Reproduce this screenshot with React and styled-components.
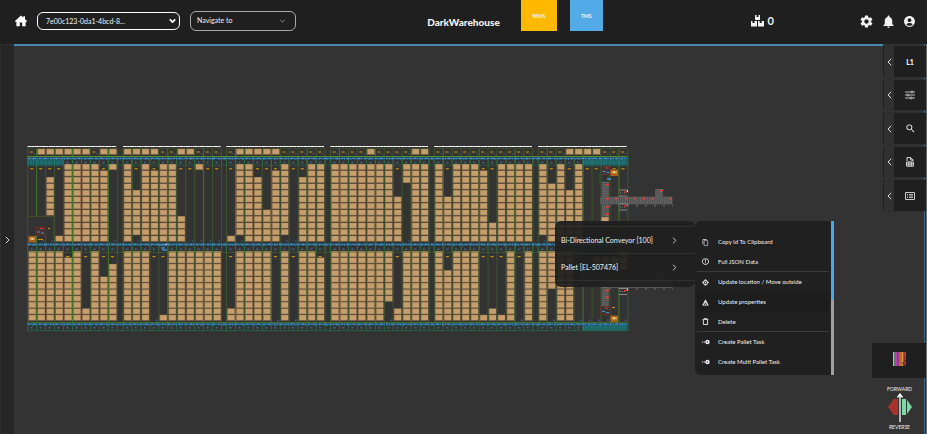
import React from "react";
import styled, { createGlobalStyle } from "styled-components";
import {
  MdSettings,
  MdNotifications,
  MdAccountCircle,
  MdSearch,
  MdContentCopy,
} from "react-icons/md";

const Global = createGlobalStyle`
  * { box-sizing: border-box; }
  body {
    margin: 0;
    background: #333333;
    color: #f2f2f2;
    font-family: Lato, "Liberation Sans", sans-serif;
  }
  button, select { font: inherit; color: inherit; }
`;

/* ---------- page frame ---------- */

const Page = styled.div`
  display: flex;
  flex-direction: column;
  min-height: 100vh;
  overflow: hidden;
`;

const Header = styled.header`
  display: grid;
  grid-template-columns: 1fr auto 1fr;
  height: 44px;
  background: #1f1f1f;
`;

const HeaderStart = styled.div`
  display: flex;
  align-items: center;
  gap: 10px;
  padding: 0 0 2px 15px;
`;

const HeaderEnd = styled.div`
  display: flex;
  align-items: center;
  padding: 0 11px 2px 21px;
`;

const Title = styled.h1`
  margin: 0;
  align-self: center;
  font-size: 10px;
  line-height: 14px;
  font-weight: 900;
`;

const IconButton = styled.button`
  display: grid;
  place-items: center;
  padding: 0;
  border: 0;
  background: none;
  cursor: pointer;
`;

const SelectBox = styled.label`
  display: grid;
  grid-template-columns: 1fr auto;
  align-items: center;
  width: ${(p) => p.$width}px;
  height: ${(p) => p.$height}px;
  border: 1px solid ${(p) => p.$edge};
  border-radius: 6px;
  padding-right: ${(p) => p.$end}px;

  select, svg { grid-row: 1; }
  select { grid-column: 1 / -1; }
  svg { grid-column: 2; pointer-events: none; }
`;

const Select = styled.select`
  appearance: none;
  width: 100%;
  border: 0;
  outline: 0;
  background: transparent;
  font-size: ${(p) => p.$size}px;
  line-height: 12px;
  padding: 0 0 ${(p) => p.$lift}px ${(p) => p.$inset}px;
  option { background: #1f1f1f; }
`;

const Tiles = styled.nav`
  display: flex;
  align-self: flex-start;
  gap: 13px;
`;

const Tile = styled.a`
  display: grid;
  place-items: center;
  width: ${(p) => p.$width}px;
  height: 31px;
  background: ${(p) => p.$color};
  color: #f2f2f2;
  font-size: 5px;
  font-weight: 900;
  text-decoration: none;
`;

const Counter = styled.div`
  display: flex;
  align-items: center;
  gap: 4px;
  margin: 0 85px 0 auto;
  font-size: 11px;
  line-height: 14px;
  font-weight: 700;
`;

const Tools = styled.div`
  display: flex;
  gap: 7px;
`;

const Body = styled.div`
  display: flex;
  flex: 1;
`;

const LeftRail = styled.button`
  width: 14px;
  padding: 0 1px 0 0;
  border: solid #303030;
  border-width: 1px 0 0 1px;
  background: #262626;
  display: grid;
  place-items: center;
`;

const Stage = styled.main`
  position: relative;
  flex: 1;
  border-top: 2px solid #4789ad;
  background: #333333;
`;

const WarehouseMap = styled.svg`
  display: block;
  width: 100%;
  height: auto;
`;

const SideColumn = styled.aside`
  display: flex;
  flex-direction: column;
  justify-content: space-between;
  width: 44px;
  padding-top: 2px;
  background: linear-gradient(to right, transparent 41px, #3b6887 41px, #3b6887 42px, #292929 42px, #292929 43px, #737373 43px);
`;

const TabList = styled.div`
  display: flex;
  flex-direction: column;
  gap: 3px;
`;

const Tab = styled.div`
  display: grid;
  grid-template-columns: 10px 1fr;
  height: 31px;
  margin-right: 1px;
  border-left: 1px solid #202020;
  background: #1f1f1f;
  font-size: 7px;
  font-weight: 900;
  box-shadow: 0 0 1px #181818;
  &:nth-child(even) { height: 30px; }
`;

const TabHandle = styled(IconButton)`
  background: #303030;
`;

const DriveGroup = styled.div`
  display: flex;
  flex-direction: column;
  margin-left: -11px;
  z-index: 1;
`;

const Barcode = styled(IconButton)`
  height: 35px;
  padding-bottom: 3px;
  margin-right: 1px;
  background: #1f1f1f;
`;

const Drive = styled.div`
  display: flex;
  flex-direction: column;
  align-items: center;
  padding: 7px 0 3px;
  font-size: 5px;
  line-height: 8px;
`;

/* ---------- context menus ---------- */

const ContextMenu = styled.div`
  position: absolute;
  left: 541px;
  top: 175px;
  display: flex;
  align-items: flex-start;
`;

const Targets = styled.div`
  width: 140px;
  padding: 5px 0 6px;
  border-radius: 6px;
  background: rgba(30, 30, 30, 0.92);
`;

const Target = styled.button`
  display: flex;
  align-items: center;
  justify-content: space-between;
  width: 100%;
  height: 27px;
  padding: 0 18px 0 6px;
  border: solid #303030;
  border-width: 1px 0 0;
  background: none;
  font-size: 7px;
  line-height: 10px;
  &:last-child { height: 28px; border-bottom-width: 1px; }
`;

const Actions = styled.div`
  display: flex;
  width: 139px;
  border-radius: 6px 0 0 6px;
  background: #202020;
`;

const ActionList = styled.div`
  flex: 1;
  padding: 11px 2px 3px;
`;

const Action = styled.button`
  display: grid;
  grid-template-columns: 9px 1fr;
  align-items: center;
  gap: 7px;
  width: 100%;
  height: 20px;
  padding: 0 0 0 5px;
  border: solid #393939;
  border-width: 0 0 ${(p) => (p.$ruled ? 1 : 0)}px;
  background: ${(p) => (p.$hot ? "#1d1d1d" : "none")};
  font-size: 6px;
  line-height: 10px;
  text-align: left;
  white-space: nowrap;
`;

const Scroller = styled.div`
  width: 3px;
  background: linear-gradient(#4fa6e0 79px, #a0a0a0 79px);
`;

/* ---------- small icons ---------- */

const Chevron = ({ dir = "right", w = 5, h = 8, weight = 1 }) => (
  <svg width={w} height={h} viewBox="0 0 5 8" fill="none" stroke="#dcdcdc" strokeWidth={weight}>
    <path d={dir === "right" ? "M.8.8 4 4 .8 7.2" : "M4.2.8 1 4l3.2 3.2"} />
  </svg>
);

const Down = ({ bold }) => (
  <svg width="7" height="6" viewBox="0 0 7 6" fill="none" stroke={bold ? "#fff" : "#999"} strokeWidth={bold ? 1.8 : 0.9}>
    <path d={bold ? "M.8 1.4 3.5 4.1 6.2 1.4" : "M1.2 2 3.5 4 5.8 2"} />
  </svg>
);

const Home = () => (
  <svg width="12" height="12" viewBox="0 0 12 12" fill="#fff">
    <path d="M6 .5 8.3 2.6V1.3H10v2.9l2 1.9v.7h-1.4v4.4H7.2V7.6H4.8v3.6H1.4V6.8H0v-.7z" />
  </svg>
);

const Crates = () => (
  <svg width="13" height="12" viewBox="0 0 13 12" fill="#f2f2f2">
    <path d="M4 0h1.5v2h2V0H9v5H4zM0 6h1.5v2h2V6H6v5.5H0zM7 6h1.7v2h2V6H13v5.5H7z" />
  </svg>
);

const Sliders = () => (
  <svg width="10" height="10" viewBox="0 0 10 10" fill="none" stroke="#ddd" strokeWidth=".8">
    <path d="M0 2h6M8 2h2M0 5h2M4 5h6M0 8h5M7 8h3" />
    <circle cx="7" cy="2" r="1" />
    <circle cx="3" cy="5" r="1" />
    <circle cx="6" cy="8" r="1" />
  </svg>
);

const Sheet = () => (
  <svg width="8" height="10" viewBox="0 0 8 10" fill="none" stroke="#eee">
    <path d="M1 4V.6h3.8L7 2.8V4M4.6.6v2.4H7" strokeWidth=".9" />
    <path d="M.6 5h6.8v4.2H.6zM.6 7.1h6.8M2.9 5v4.2M5.2 5v4.2" strokeWidth=".9" />
  </svg>
);

const ListCard = () => (
  <svg width="10" height="8" viewBox="0 0 10 8" fill="none" stroke="#ddd">
    <path d="M.5.5h9v7h-9z" strokeWidth=".9" />
    <path d="M2 2.500h1M4 2.500h4M2 4h1M4 4h4M2 5.500h1M4 5.500h4" strokeWidth=".8" />
  </svg>
);

const Shield = () => (
  <svg width="7" height="8" viewBox="0 0 7 8" fill="none" stroke="#eee" strokeWidth=".9">
    <path d="M1.500 1h4L6.500 2.500v2L5.200 6H4.300L3.500 7 2.700 6h-.9L.5 4.500v-2zM3.500 2v1.700M3.500 4.300v.8" />
  </svg>
);

const Target4 = () => (
  <svg width="7" height="7" viewBox="0 0 7 7" fill="none">
    <path d="M3.500 0 7 3.500 3.500 7 0 3.500z" fill="#ddd" />
    <circle cx="3.500" cy="3.500" r="1.600" fill="#222" />
    <circle cx="3.500" cy="3.500" r=".8" fill="#eee" />
  </svg>
);

const Warning = () => (
  <svg width="7" height="7" viewBox="0 0 7 7">
    <path d="M3.500.3 6.800 6.500H.2z" fill="#eee" />
    <path d="M2 5.500h1V4h1v1.500h1" stroke="#222" strokeWidth=".7" fill="none" />
  </svg>
);

const Bin = () => (
  <svg width="7" height="7" viewBox="0 0 7 7" fill="none" stroke="#eee" strokeWidth=".9">
    <path d="M.6 1.400h5.800M2.500 1.200V.5h2v.7M1.400 1.600v4.900h4.200V1.600" />
  </svg>
);

const TaskIcon = () => (
  <svg width="8" height="6" viewBox="0 0 8 6" fill="#eee">
    <path d="M0 2.500h1v1H0zM1.600 2.500h2v1h-2z" />
    <circle cx="5.500" cy="3" r="2.200" />
    <path d="M4.800 3h1.400M5.500 2.300v1.400" stroke="#222" strokeWidth=".5" />
  </svg>
);

const StripeIcon = () => (
  <svg width="13" height="14" viewBox="0 0 13 14">
    {["#b9c0a0", "#4f9c78", "#c23bb8", "#a048c8", "#e0512f", "#ef7a2c", "#d8a03a", "#e8392f", "#e0304a"].map((c, i) => (
      <rect key={i} x={i * 1.44} width="1.400" height="14" fill={c} />
    ))}
    <path d="M9 11h2M11 9h2M11 6h1M10 13h3" stroke="#222" />
  </svg>
);

const DriveIcon = () => (
  <svg width="26" height="30" viewBox="0 0 26 30">
    <path d="M1 14 6 7v14z" fill="#a8332c" />
    <path d="M6 6h5v16H6z" fill="#a8332c" />
    <path d="M15 6h4v16h-4z" fill="#79dca4" />
    <path d="m25 14-5-7v14z" fill="#79dca4" />
    <path d="M13 2v27M10.500 4.500 13 1l2.500 3.500" stroke="#fff" strokeWidth="1.300" fill="none" />
  </svg>
);

/* ---------- warehouse drawing ---------- */

const PITCH = 8.96;
const F = [0, 11];
const L = [0, 10];
const N = null;

// One entry per rack: filled row span of every aisle above and below the middle track.
const RACKS = [
  {
    x: 27.700, top: "0111111011",
    upper: [N, N, [2, 7], [11, 11], F, F, F, F, [1, 11], [0, 0]],
    lower: [L, L, L, L, [1, 10], L, [9, 10], L, [4, 10], [2, 10]],
  },
  {
    x: 123, top: "11110011000",
    upper: [F, [4, 10], F, [1, 11], F, F, [8, 11], N, [0, 0], N, N],
    lower: [L, L, L, N, [10, 10], L, L, L, L, L, L],
  },
  {
    x: 226.500, top: "01111100000",
    upper: [[11, 11], [0, 10], F, [2, 11], [7, 11], [1, 11], [0, 10], N, [2, 11], F, F],
    lower: [[9, 10], L, L, L, L, N, L, N, L, L, [1, 10]],
  },
  {
    x: 330.500, top: "00001000011",
    upper: [F, F, F, F, F, F, F, [5, 11], [0, 2], F, F],
    lower: [L, L, L, L, L, L, [0, 7], [9, 10], L, L, L],
  },
  {
    x: 434.300, top: "00000000000",
    upper: [F, [5, 11], F, F, F, [1, 11], [9, 11], F, F, F, F],
    lower: [L, [3, 10], L, L, L, [10, 10], [9, 10], [10, 10], L, N, L],
  },
  {
    x: 538.300, top: "0001111000",
    upper: [[0, 10], [3, 11], F, [4, 11], F, N, N, N, N, N],
    lower: [L, [0, 5], L, L, N, N, [1, 2], [1, 2], [1, 2], [0, 2]],
  },
];

const Crate = ({ x, y, h = 5.900 }) => (
  <g>
    <rect x={x + 0.600} y={y} width="7.800" height={h} fill="#92734f" />
    <rect x={x + 1.400} y={y + 0.400} width="6.500" height={h - 1.100} fill="#c69d6c" />
  </g>
);

const Stack = ({ span, x, y, step }) =>
  span
    ? Array.from({ length: span[1] - span[0] + 1 }, (_, i) => (
        <Crate key={i} x={x} y={y + (span[0] + i) * step} />
      ))
    : null;

const Amber = ({ x, y }) => (
  <g>
    <rect x={x + 2.500} y={y} width="3.200" height="1" fill="#c99008" />
    <rect x={x + 3.500} y={y + 0.800} width="1.200" height="1" fill="#8c6715" />
  </g>
);

const Speck = ({ x, y }) => (
  <g>
    <rect x={x + 3} y={y} width="1.500" height="1.600" fill="#3d6f99" />
    <rect x={x + 4.500} y={y} width="1" height="1.600" fill="#41505c" />
  </g>
);

const Track = ({ y }) => (
  <g>
    <path d={`M27.700 ${y}H627`} stroke="#235067" strokeWidth="2.200" />
    <path d={`M27.700 ${y}H627`} stroke="#459bd0" strokeWidth="1.200" strokeDasharray="2 .8 1 1.200 3 .7 1 1.500" />
    <path d={`M29 ${y + 1}H627`} stroke="#36739b" strokeWidth="1" strokeDasharray="1 2 2 1.500 1 3" />
  </g>
);

const Rack = ({ rack }) => {
  const n = rack.upper.length;
  const end = rack.x + n * PITCH;
  return (
    <g>
      <path d={`M${rack.x} 146.500H${end - 1}`} stroke="#999" strokeWidth="1.200" />
      <path d={`M${rack.x} 146.500H${end - 1}`} stroke="#fff" strokeDasharray="4 .5 2 .5" />
      <path d={`M${rack.x} 148.500H${end}`} stroke="#3c5028" strokeWidth=".7" />
      {rack.upper.map((up, i) => {
        const x = rack.x + i * PITCH;
        const low = rack.lower[i];
        return (
          <g key={i}>
            {rack.top[i] === "1" ? (
              <Crate x={x} y={148.800} h={5.900} />
            ) : (
              <g>
                <Amber x={x - 0.500} y={151.500} />
                <rect x={x + 6} y="153" width="1.300" height="1" fill="#3d6078" />
              </g>
            )}
            <Speck x={x} y={161.800} />
            <Speck x={x} y={248.500} />
            <Speck x={x} y={327} />
            {(!up || up[0] > 0) && <Amber x={x} y={168.200} />}
            {(!low || low[0] > 0) && <Amber x={x} y={256} />}
            {(!up || up[1] < 11) && <rect x={x + 6} y="240" width="1.400" height="1.600" fill="#34597a" />}
            {(!low || low[1] < 10) && <rect x={x + 6} y="319.500" width="1.400" height="1.600" fill="#34709a" />}
            <Stack span={up} x={x} y={164} step={6.520} />
            <Stack span={low} x={x} y={251.200} step={6.360} />
          </g>
        );
      })}
      {Array.from({ length: n + 1 }, (_, i) => {
        const x = rack.x + i * PITCH;
        const bright = i % 4 === 1;
        return (
          <g key={i}>
            <path d={`M${x} 149V323`} stroke={bright ? "#477d25" : "#41582b"} strokeWidth=".9" />
            <path d={`M${x} 157V165.500M${x} 243V252M${x} 322V331`} stroke="#247044" strokeWidth=".9" />
          </g>
        );
      })}
    </g>
  );
};

const Rollers = ({ x, y, w, h, vertical }) => (
  <g>
    <rect x={x} y={y} width={w} height={h} fill="#505050" />
    <path
      d={vertical ? `M${x + w / 2} ${y}V${y + h}` : `M${x} ${y + h / 2}H${x + w}`}
      stroke="#777"
      strokeWidth={vertical ? w - 1 : h - 1}
      strokeDasharray="1 1.200"
      opacity=".6"
    />
  </g>
);

const Station = ({ x, y }) => (
  <g>
    <path d={`M${x} ${y}h8M${x} ${y + 6}h8`} stroke="#888" />
    <path d={`M${x + 1} ${y + 3}h6`} stroke="#7b8b8b" strokeDasharray="1 1" />
    <path d={`M${x + 5} ${y + 2}h3`} stroke="#d33" strokeWidth="1.300" />
    <path d={`M${x + 8.500} ${y}v2`} stroke="#ddd" />
  </g>
);

const Crane = ({ x, y }) => (
  <g>
    <rect x={x} y={y} width="7.500" height="6.500" fill="#a76118" />
    <rect x={x + 1} y={y + 1.500} width="5.500" height="2.500" fill="#d49237" />
    <rect x={x + 3} y={y + 2} width="1.500" height="1.500" fill="#fff1c9" />
  </g>
);

const Shuttle = ({ x, y }) => (
  <g>
    <rect x={x} y={y} width="9" height="8" fill="#3c3637" stroke="#742b2b" strokeWidth=".8" />
    <path d={`M${x + 4} ${y + 1.500}h3`} stroke="#e03434" />
    <path d={`M${x + 1} ${y + 5}h3m1 1h3`} stroke="#4a90c4" strokeWidth="1.200" />
  </g>
);

const Warehouse = () => (
  <WarehouseMap viewBox="14 46 869 388" role="img" aria-label="Warehouse floor map">
    <path d="M27.700 165.300H627" stroke="#2c5840" strokeWidth=".8" />
    {RACKS.map((r) => (
      <Rack key={r.x} rack={r} />
    ))}
    <rect x="27.700" y="158" width="36" height="7.500" fill="#126c70" opacity=".75" />
    <rect x="582.500" y="156.500" width="45" height="9" fill="#12747a" opacity=".7" />
    <rect x="582.500" y="322.500" width="45" height="8.500" fill="#12747a" opacity=".7" />
    <path d="M28 162H64M583 162H627M583 328H627" stroke="#36a18b" strokeWidth="5" strokeDasharray=".6 2" opacity=".5" />
    <path d="M27.700 156.500H627" stroke="#4c8a2d" strokeWidth="1" />
    <path d="M27.700 252.400H627" stroke="#487529" strokeWidth=".7" opacity=".7" />
    <path d="M27.700 322.500H627" stroke="#426b2a" strokeWidth="1" />
    <path d="M27.700 330.700H627" stroke="#246643" strokeWidth=".9" />
    <Track y={158.300} />
    <Track y={244.300} />
    <Track y={324.200} />
    <rect x="28.500" y="217" width="18" height="18" fill="#333" />
    <path d="M27.700 216.400H54V243" stroke="#3c5028" fill="none" />
    <Shuttle x={36} y={227} />
    <Crane x={28.500} y={236} />
    <path d="M38 239.500h5M48 228.500h2" stroke="#c99008" strokeWidth="1.200" />
    <path d="M159 245h8M161 248h4M162 250h5" stroke="#4388ba" strokeWidth="1.500" />
    <rect x="165.500" y="243.500" width="1.200" height="1.200" fill="#dff" />
    <rect x="599" y="174" width="10" height="8" fill="none" stroke="#245b2c" />
    <Shuttle x={601.500} y={166.500} />
    <path d="M607 179h4" stroke="#4a9ae0" strokeWidth="1.500" />
    <Crane x={610.500} y={169.500} />
    <Rollers x={601.500} y={182} w={7.500} h={35} vertical />
    <Rollers x={600.500} y={196.500} w={72} h={8} />
    <Rollers x={655} y={189} w={8} h={8} vertical />
    <Station x={619} y={190} />
    <Station x={619} y={204} />
    <path d="M606 184.500h3M606 207h3M606 214h3M606 198.500h3M615 198.500h3M625 198.500h3M633 198.500h3M642 198.500h3M651 198.500h3M660 190.500h3M669 198.500h3" stroke="#ee3c3c" strokeWidth="1.500" />
    <path d="M609 205.500h64" stroke="#5b5b5b" strokeDasharray="2 7" strokeWidth="2" />
    <Crate x={600.500} y={217} h={5} />
    <Rollers x={600.500} y={280} w={72} h={8} />
    <Rollers x={655} y={272} w={8} h={8} vertical />
    <Rollers x={601.500} y={287} w={7.500} h={20} vertical />
    <path d="M609 288.500h64" stroke="#5b5b5b" strokeDasharray="2 7" strokeWidth="2" />
    <Station x={619} y={288.500} />
    <path d="M606 290.500h3M606 297.500h3" stroke="#ee3c3c" strokeWidth="1.500" />
    <Shuttle x={601} y={306.500} />
    <Crane x={610.500} y={315.500} />
    <path d="M612 307.500h3" stroke="#d49237" />
  </WarehouseMap>
);

/* ---------- content ---------- */

const TABS = [
  { name: "Level", icon: "L1" },
  { name: "Filters", icon: <Sliders /> },
  { name: "Search", icon: <MdSearch size={11} /> },
  { name: "Reports", icon: <Sheet /> },
  { name: "List", icon: <ListCard /> },
];

const ACTIONS = [
  { text: "Copy Id To Clipboard", icon: <MdContentCopy size={7} /> },
  { text: "Full JSON Data", icon: <Shield />, ruled: true },
  { text: "Update location / Move outside", icon: <Target4 /> },
  { text: "Update properties", icon: <Warning />, hot: true },
  { text: "Delete", icon: <Bin />, ruled: true },
  { text: "Create Pallet Task", icon: <TaskIcon /> },
  { text: "Create Multi Pallet Task", icon: <TaskIcon /> },
];

export default function App() {
  return (
    <Page>
      <Global />
      <Header>
        <HeaderStart>
          <IconButton aria-label="Home"><Home /></IconButton>
          <SelectBox $width={143} $height={18} $edge="#fff" $end={3}>
            <Select aria-label="Warehouse id" $size={7} $inset={8} $lift={0}>
              <option>7e00c123-0da1-4bcd-8...</option>
            </Select>
            <Down bold />
          </SelectBox>
          <SelectBox $width={106} $height={20} $edge="#aaa" $end={9}>
            <Select aria-label="Navigate to" $size={7} $inset={6} $lift={3}>
              <option>Navigate to</option>
            </Select>
            <Down />
          </SelectBox>
        </HeaderStart>
        <Title>DarkWarehouse</Title>
        <HeaderEnd>
          <Tiles>
            <Tile href="#wms" $color="#ffb800" $width={36}>WMS</Tile>
            <Tile href="#tms" $color="#52aae7" $width={33}>TMS</Tile>
          </Tiles>
          <Counter><Crates />0</Counter>
          <Tools>
            <IconButton aria-label="Settings"><MdSettings size={15} /></IconButton>
            <IconButton aria-label="Notifications"><MdNotifications size={15} /></IconButton>
            <IconButton aria-label="Account"><MdAccountCircle size={13} /></IconButton>
          </Tools>
        </HeaderEnd>
      </Header>
      <Body>
        <LeftRail aria-label="Open left panel"><Chevron /></LeftRail>
        <Stage>
          <Warehouse />
          <ContextMenu>
            <Targets>
              <Target>Bi-Directional Conveyor [100]<Chevron h={7} /></Target>
              <Target>Pallet [EL-507476]<Chevron h={7} /></Target>
            </Targets>
            <Actions>
              <ActionList>
                {ACTIONS.map((a) => (
                  <Action key={a.text} $ruled={a.ruled} $hot={a.hot}>
                    {a.icon}
                    <span>{a.text}</span>
                  </Action>
                ))}
              </ActionList>
              <Scroller />
            </Actions>
          </ContextMenu>
        </Stage>
        <SideColumn>
          <TabList>
            {TABS.map((t) => (
              <Tab key={t.name}>
                <TabHandle aria-label={`Expand ${t.name}`}><Chevron dir="left" /></TabHandle>
                <IconButton aria-label={t.name}>{t.icon}</IconButton>
              </Tab>
            ))}
          </TabList>
          <DriveGroup>
            <Barcode aria-label="Colour legend"><StripeIcon /></Barcode>
            <Drive>
              FORWARD
              <DriveIcon />
              REVERSE
            </Drive>
          </DriveGroup>
        </SideColumn>
      </Body>
    </Page>
  );
}
